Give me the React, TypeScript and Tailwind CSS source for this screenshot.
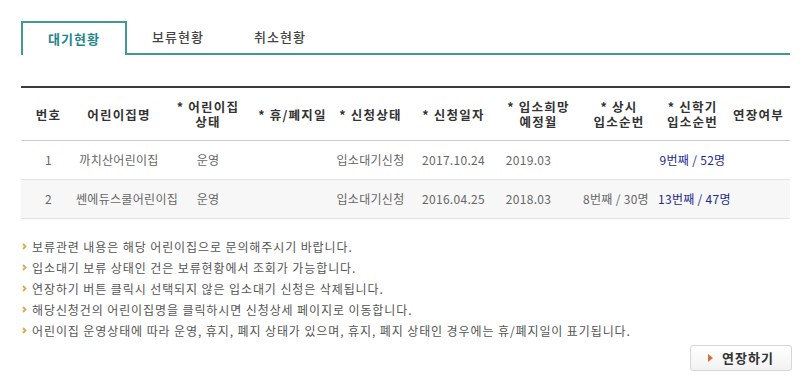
import React from "react";

const font = { fontFamily: '"Noto Sans CJK KR", "Noto Sans", sans-serif' };

type Col = { w: string; head: React.ReactNode };

const cols: Col[] = [
  { w: "w-[55px]", head: "번호" },
  { w: "w-[86px]", head: "어린이집명" },
  { w: "w-[92px]", head: <>* 어린이집<br />상태</> },
  { w: "w-[77px]", head: "* 휴/폐지일" },
  { w: "w-[79px]", head: "* 신청상태" },
  { w: "w-[87px]", head: "* 신청일자" },
  { w: "w-[83px]", head: <>* 입소희망<br />예정월</> },
  { w: "w-[78px]", head: <>* 상시<br />입소순번</> },
  { w: "w-[69px]", head: <>* 신학기<br />입소순번</> },
  { w: "w-[63px]", head: "연장여부" },
];

const rows = [
  ["1", "까치산어린이집", "운영", "", "입소대기신청", "2017.10.24", "2019.03", "", "9번째 / 52명", ""],
  ["2", "쎈에듀스쿨어린이집", "운영", "", "입소대기신청", "2016.04.25", "2018.03", "8번째 / 30명", "13번째 / 47명", ""],
];

const notes = [
  "보류관련 내용은 해당 어린이집으로 문의해주시기 바랍니다.",
  "입소대기 보류 상태인 건은 보류현황에서 조회가 가능합니다.",
  "연장하기 버튼 클릭시 선택되지 않은 입소대기 신청은 삭제됩니다.",
  "해당신청건의 어린이집명을 클릭하시면 신청상세 페이지로 이동합니다.",
  "어린이집 운영상태에 따라 운영, 휴지, 폐지 상태가 있으며, 휴지, 폐지 상태인 경우에는 휴/폐지일이 표기됩니다.",
];

export default function App() {
  return (
    <div className="w-[810px] h-[392px] bg-white overflow-hidden" style={font}>
      <div className="pl-[21px] pt-[21px] w-[790px]">
        {/* tabs */}
        <div className="flex h-[34px] border-b-2 border-[#3f9999]">
          <div className="-mb-[2px] h-[34px] w-[106px] border-2 border-b-0 border-[#3f9999] bg-white flex items-center justify-center text-[13px] tracking-[1px] font-bold text-[#23868a]">
            대기현황
          </div>
          <div className="w-[102px] flex items-center justify-center text-[13px] tracking-[1px] font-medium text-[#444]">
            보류현황
          </div>
          <div className="w-[102px] flex items-center justify-center text-[13px] tracking-[1px] font-medium text-[#444]">
            취소현황
          </div>
        </div>

        {/* table */}
        <div className="mt-[31px] border-t-2 border-[#3a3a3a]">
          <div className="flex h-[53px] border-b border-[#cccccc] items-center">
            {cols.map((c, i) => (
              <div
                key={i}
                className={`${c.w} shrink-0 text-center text-[12.5px] leading-[15px] font-bold text-[#333] whitespace-nowrap tracking-[1.2px]`}
              >
                {c.head}
              </div>
            ))}
          </div>
          {rows.map((r, ri) => (
            <div
              key={ri}
              className={`flex h-[39px] items-center border-b border-[#e3e3e3] ${ri === 1 ? "bg-[#f7f7f7]" : "bg-white"}`}
            >
              {r.map((v, i) => (
                <div
                  key={i}
                  className={`${cols[i].w} shrink-0 text-center text-[12px] tracking-[0.3px] whitespace-nowrap ${
                    i === 8 ? "text-[#1b2a8f]" : "text-[#666]"
                  } ${i === 6 ? "pr-[20px]" : ""} ${i === 7 ? "pr-[6px]" : ""}`}
                >
                  {v}
                </div>
              ))}
            </div>
          ))}
        </div>

        {/* notes */}
        <ul className="mt-[17px] flex flex-col">
          {notes.map((n, i) => (
            <li key={i} className="flex items-center h-[21px] text-[12px] tracking-[0.9px] text-[#555] whitespace-nowrap">
              <svg width="5" height="7" viewBox="0 0 5 7" className="ml-[1px] mr-[5px] shrink-0">
                <path d="M1 1 L3.5 3.5 L1 6" fill="none" stroke="#e0a94a" strokeWidth="1.8" />
              </svg>
              {n}
            </li>
          ))}
        </ul>

        {/* button */}
        <div className="flex justify-end -mr-[2px] mt-[4px]">
          <button className="h-[26px] w-[102px] rounded-[3px] border border-[#d6d6d6] bg-gradient-to-b from-white to-[#f2f2f2] flex items-center justify-center gap-[9px] text-[13px] tracking-[1px] font-bold text-[#333]">
            <svg width="5" height="8" viewBox="0 0 5 8">
              <path d="M0 0 L5 4 L0 8 Z" fill="#d9703a" />
            </svg>
            연장하기
          </button>
        </div>
      </div>
    </div>
  );
}
